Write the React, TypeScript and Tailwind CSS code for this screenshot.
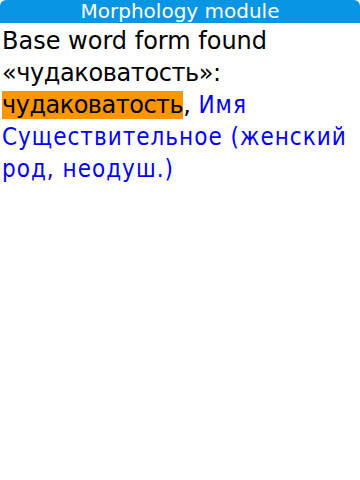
export default function App() {
  return (
    <div className="w-[360px] h-[480px] bg-white overflow-hidden font-['DejaVu_Sans',sans-serif]">
      <div className="h-[23px] bg-[#0896e4] rounded-t-[6px] flex items-center justify-center text-white text-[20px] leading-[23px]">
        Morphology module
      </div>
      <div className="px-[2px] pt-[2px] text-[24px] leading-[32px] text-black">
        <p>
          Base word form found <span className="tracking-[-0.4px]">«чудаковатость»:</span>
        </p>
        <p>
          <span className="bg-[#ff9600] tracking-[-0.5px]">чудаковатость</span>
          <span>, </span>
          <span className="text-[#0000ff] tracking-[1px] font-['DejaVu_Sans_Condensed','DejaVu_Sans',sans-serif]">
            Имя Существительное (женский род, неодуш.)
          </span>
        </p>
      </div>
    </div>
  );
}
